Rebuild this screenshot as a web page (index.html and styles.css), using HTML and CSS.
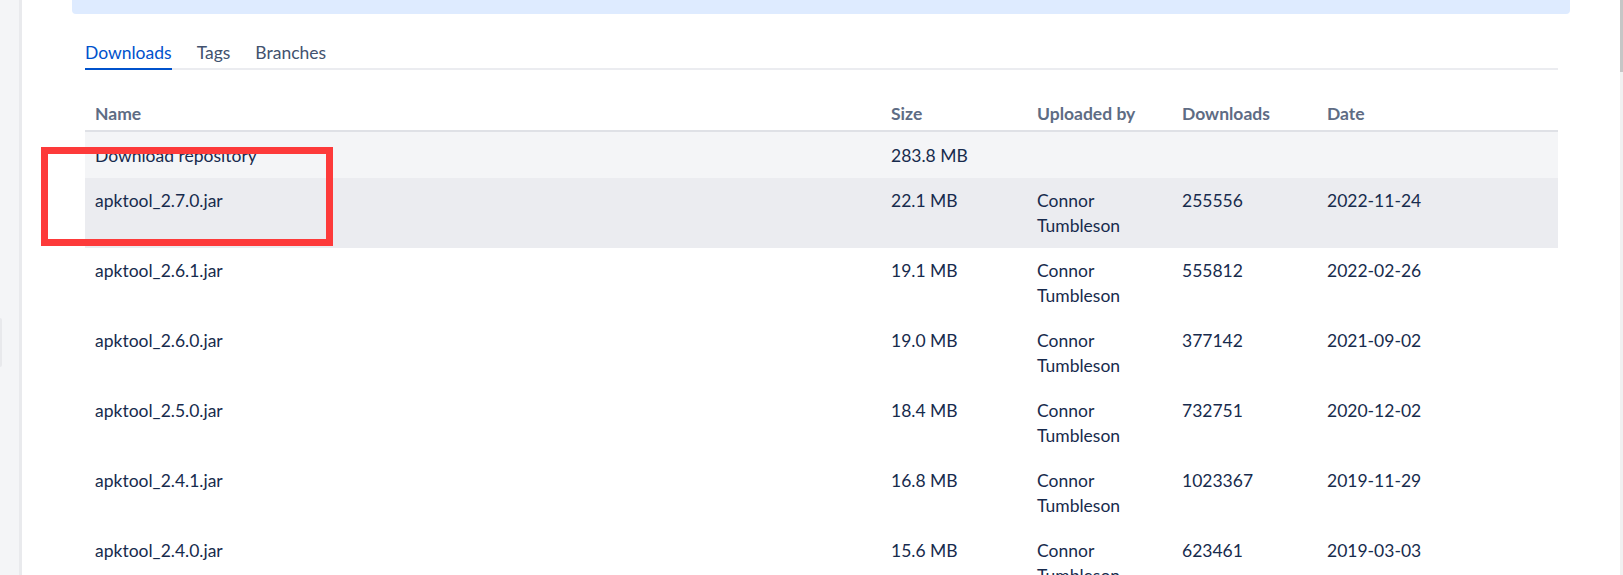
FILE: index.html
```html
<!DOCTYPE html>
<html lang="en">
<head>
<meta charset="utf-8">
<title>Downloads</title>
<link rel="stylesheet" href="styles.css">
</head>
<body>
<div class="app">
  <aside class="sidebar"><div class="sidebar-grip"></div></aside>
  <main class="main">
    <div class="banner"></div>
    <section class="content">
      <nav class="tabs">
        <a class="tab active">Downloads</a>
        <a class="tab">Tags</a>
        <a class="tab">Branches</a>
      </nav>
      <table class="files">
        <colgroup>
          <col class="c-name"><col class="c-size"><col class="c-user"><col class="c-count"><col>
        </colgroup>
        <thead>
          <tr><th>Name</th><th>Size</th><th>Uploaded by</th><th>Downloads</th><th>Date</th></tr>
        </thead>
        <tbody>
          <tr class="repo"><td>Download repository</td><td>283.8 MB</td><td></td><td></td><td></td></tr>
          <tr class="hover"><td>apktool_2.7.0.jar</td><td>22.1 MB</td><td>Connor Tumbleson</td><td>255556</td><td>2022-11-24</td></tr>
          <tr><td>apktool_2.6.1.jar</td><td>19.1 MB</td><td>Connor Tumbleson</td><td>555812</td><td>2022-02-26</td></tr>
          <tr><td>apktool_2.6.0.jar</td><td>19.0 MB</td><td>Connor Tumbleson</td><td>377142</td><td>2021-09-02</td></tr>
          <tr><td>apktool_2.5.0.jar</td><td>18.4 MB</td><td>Connor Tumbleson</td><td>732751</td><td>2020-12-02</td></tr>
          <tr><td>apktool_2.4.1.jar</td><td>16.8 MB</td><td>Connor Tumbleson</td><td>1023367</td><td>2019-11-29</td></tr>
          <tr><td>apktool_2.4.0.jar</td><td>15.6 MB</td><td>Connor Tumbleson</td><td>623461</td><td>2019-03-03</td></tr>
          <tr><td>apktool_2.3.4.jar</td><td>10.7 MB</td><td>Connor Tumbleson</td><td>498213</td><td>2018-08-10</td></tr>
        </tbody>
      </table>
    </section>
  </main>
  <div class="scrollbar"><div class="thumb"></div></div>
</div>
<div class="annotation"></div>
</body>
</html>
```

FILE: styles.css
```css
html, body {
  margin: 0;
  padding: 0;
  height: 100%;
  overflow: hidden;
  background: #ffffff;
}

body {
  font-family: Lato, "Noto Sans", sans-serif;
  font-size: 17.5px;
  line-height: 25px;
  color: #172b4d;
}

.app {
  display: flex;
  height: 575px;
}

.sidebar {
  width: 19px;
  flex: none;
  background: #f4f5f7;
  border-right: 3px solid #e9eaed;
  display: flex;
  flex-direction: column;
  padding-top: 318px;
  box-sizing: content-box;
}

.sidebar-grip {
  width: 2px;
  height: 49px;
  background: #e8e9ec;
  border-radius: 0 2px 2px 0;
}

.main {
  flex: 1;
  min-width: 0;
  padding: 0 50px;
  display: flex;
  flex-direction: column;
}

.banner {
  height: 14px;
  background: #deebff;
  border-radius: 0 0 4px 4px;
  flex: none;
}

.content {
  padding: 26px 12px 0 13px;
}

.tabs {
  display: flex;
  gap: 25px;
  border-bottom: 2px solid #ebecf0;
}

.tab {
  color: #42526e;
  padding-bottom: 3px;
  margin-bottom: -2px;
  border-bottom: 2px solid transparent;
  cursor: pointer;
}

.tab.active {
  color: #0052cc;
  border-bottom-color: #0052cc;
}

.files {
  width: 100%;
  margin-top: 26px;
  border-collapse: collapse;
  table-layout: fixed;
}

.c-name { width: 796px; }
.c-size { width: 146px; }
.c-user { width: 145px; }
.c-count { width: 145px; }

.files th {
  text-align: left;
  font-weight: 700;
  color: #5e6c84;
  padding: 5px 10px 4px;
  border-bottom: 2px solid #dfe1e6;
}

.files td {
  padding: 10px 10px;
  vertical-align: top;
}

.files tr.repo td {
  background: #f4f5f7;
  padding-top: 11px;
}

.files tr.hover td {
  background: #ebecf0;
}

.scrollbar {
  width: 3px;
  flex: none;
  background: #f1f1f1;
}

.scrollbar .thumb {
  height: 72px;
  background: #c6c6c6;
}

.annotation {
  position: absolute;
  left: 41px;
  top: 147px;
  width: 278px;
  height: 85px;
  border: 7px solid #fd3a3a;
}
```
